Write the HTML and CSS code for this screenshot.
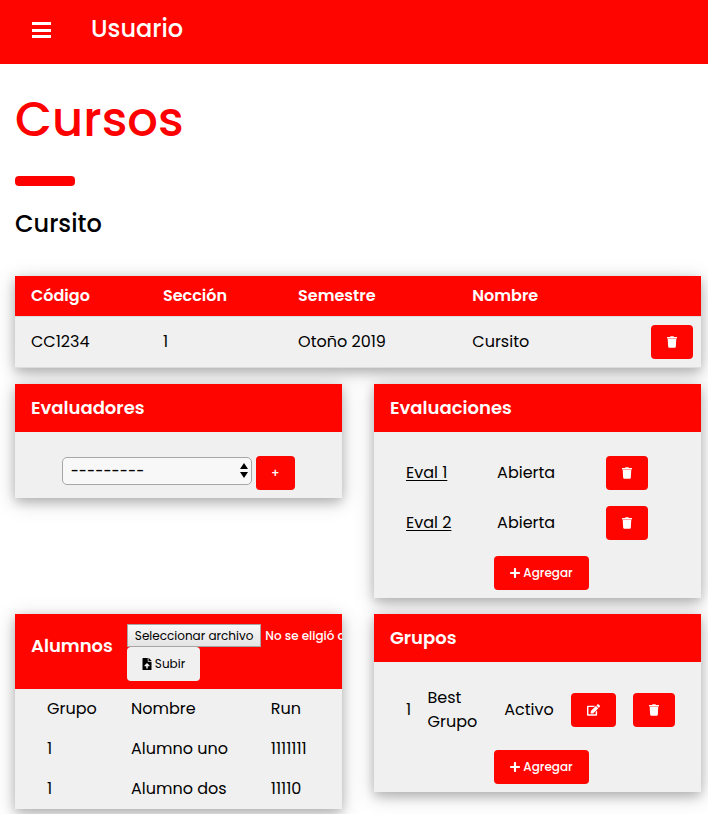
FILE: index.html
```html
<!DOCTYPE html>
<html lang="es">
<head>
<meta charset="utf-8">
<meta name="viewport" content="width=device-width, initial-scale=1">
<title>Cursos</title>
<link rel="stylesheet" href="styles.css">
</head>
<body>
<svg class="sprite" aria-hidden="true">
  <symbol id="trash" viewBox="0 0 448 512"><path d="M432 32H312l-9.400-18.700A24 24 0 0 0 281.100 0H166.800a23.720 23.720 0 0 0-21.400 13.300L136 32H16A16 16 0 0 0 0 48v32a16 16 0 0 0 16 16h416a16 16 0 0 0 16-16V48a16 16 0 0 0-16-16z" /><path d="M53.200 467a48 48 0 0 0 47.900 45h245.800a48 48 0 0 0 47.900-45L416 112H32z"/></symbol>
  <symbol id="plus" viewBox="0 0 448 512"><path d="M416 208H272V64c0-17.670-14.330-32-32-32h-32c-17.670 0-32 14.330-32 32v144H32c-17.670 0-32 14.330-32 32v32c0 17.670 14.330 32 32 32h144v144c0 17.670 14.330 32 32 32h32c17.670 0 32-14.330 32-32V304h144c17.670 0 32-14.330 32-32v-32c0-17.670-14.330-32-32-32z"/></symbol>
  <symbol id="edit" viewBox="0 0 576 512"><path d="M402.600 83.200l90.200 90.200c3.800 3.800 3.800 10 0 13.800L274.400 405.600l-92.800 10.300c-12.400 1.400-22.900-9.100-21.500-21.500l10.300-92.800L388.800 83.200c3.800-3.800 10-3.800 13.800 0zm162-22.900l-48.800-48.800c-15.200-15.200-39.900-15.200-55.200 0l-35.400 35.400c-3.800 3.800-3.800 10 0 13.800l90.200 90.200c3.800 3.800 10 3.800 13.800 0l35.400-35.400c15.200-15.300 15.200-40 0-55.200zM384 346.200V448H64V128h229.800c3.200 0 6.200-1.300 8.500-3.500l40-40c7.600-7.600 2.200-20.500-8.500-20.500H48C21.500 64 0 85.500 0 112v352c0 26.500 21.500 48 48 48h352c26.500 0 48-21.500 48-48V306.200c0-10.700-12.900-16-20.500-8.500l-40 40c-2.200 2.300-3.500 5.300-3.500 8.500z"/></symbol>
  <symbol id="upload" viewBox="0 0 384 512"><path d="M224 136V0H24C10.700 0 0 10.700 0 24v464c0 13.300 10.700 24 24 24h336c13.300 0 24-10.700 24-24V160H248c-13.200 0-24-10.800-24-24zm65.200 216H224v80c0 8.800-7.200 16-16 16h-32c-8.800 0-16-7.200-16-16v-80H94.800c-14.300 0-21.400-17.300-11.300-27.400l96.400-95.700c6.700-6.600 17.400-6.600 24 0l96.400 95.700c10.200 10.100 3.100 27.400-11.100 27.400zM377 105L279.100 7c-4.500-4.500-10.600-7-17-7H256v128h128v-6.100c0-6.300-2.500-12.400-7-16.900z"/></symbol>
</svg>
<header class="topbar">
  <button class="menu" type="button" aria-label="Menú">
    <svg width="19" height="16" viewBox="0 0 19 16" aria-hidden="true"><path d="M0 0h19v3H0zM0 7h19v3H0zM0 13h19v3H0z"/></svg>
  </button>
  <span class="user">Usuario</span>
</header>
<main class="page">
  <h1 class="title">Cursos</h1>
  <hr class="rule">
  <h2 class="subtitle">Cursito</h2>

  <table class="card course">
    <thead>
      <tr><th class="c-code">Código</th><th class="c-section">Sección</th><th class="c-term">Semestre</th><th class="c-name">Nombre</th><th></th></tr>
    </thead>
    <tbody>
      <tr><td>CC1234</td><td>1</td><td>Otoño 2019</td><td>Cursito</td><td><button class="btn" type="button" aria-label="Eliminar"><svg class="icon"><use href="#trash"/></svg></button></td></tr>
    </tbody>
  </table>

  <div class="cards">
    <section class="card">
      <header class="card-head"><h3>Evaluadores</h3></header>
      <form class="picker">
        <span class="select-box">
          <select class="select" aria-label="Evaluador"><option>---------</option></select>
          <svg class="arrows" viewBox="0 0 8 15" aria-hidden="true"><path d="M4 0l4 6H0zM4 15l4-6H0z"/></svg>
        </span>
        <button class="btn" type="button">+</button>
      </form>
    </section>

    <section class="card">
      <header class="card-head"><h3>Evaluaciones</h3></header>
      <div class="card-body">
        <table class="list">
          <tr><td class="e-name"><a href="#eval1">Eval 1</a></td><td class="e-state">Abierta</td><td><button class="btn" type="button" aria-label="Eliminar"><svg class="icon"><use href="#trash"/></svg></button></td></tr>
          <tr><td><a href="#eval2">Eval 2</a></td><td>Abierta</td><td><button class="btn" type="button" aria-label="Eliminar"><svg class="icon"><use href="#trash"/></svg></button></td></tr>
        </table>
        <div class="add"><button class="btn" type="button"><svg class="icon"><use href="#plus"/></svg>Agregar</button></div>
      </div>
    </section>

    <section class="card">
      <header class="card-head with-form">
        <h3>Alumnos</h3>
        <form class="upload">
          <div class="file">
            <input class="file-input" type="file" id="archivo">
            <label class="file-btn" for="archivo">Seleccionar archivo</label>
            <span class="file-name">No se eligió archivo</span>
          </div>
          <button class="btn light" type="button"><svg class="icon"><use href="#upload"/></svg>Subir</button>
        </form>
      </header>
      <table class="list">
        <tr><td class="a-group">Grupo</td><td class="a-name">Nombre</td><td>Run</td></tr>
        <tr><td>1</td><td>Alumno uno</td><td>1111111</td></tr>
        <tr><td>1</td><td>Alumno dos</td><td>11110</td></tr>
      </table>
    </section>

    <section class="card">
      <header class="card-head"><h3>Grupos</h3></header>
      <div class="card-body">
        <table class="list">
          <tr><td class="g-num">1</td><td class="g-name">Best Grupo</td><td class="g-state">Activo</td><td class="g-edit"><button class="btn" type="button" aria-label="Editar"><svg class="icon wide"><use href="#edit"/></svg></button></td><td><button class="btn" type="button" aria-label="Eliminar"><svg class="icon"><use href="#trash"/></svg></button></td></tr>
        </table>
        <div class="add"><button class="btn" type="button"><svg class="icon"><use href="#plus"/></svg>Agregar</button></div>
      </div>
    </section>
  </div>
</main>
</body>
</html>
```
FILE: styles.css
```css
:root {
  --red: #ff0500;
  --gray: #f0f0f0;
}

* {
  box-sizing: border-box;
}

body {
  margin: 0;
  background: #fff;
  color: #000;
  font: 16px/24px Poppins, Inter, sans-serif;
}

.sprite {
  display: none;
}

h1,
h2,
h3 {
  margin: 0;
}

.topbar {
  display: flex;
  align-items: center;
  gap: 24px;
  height: 64px;
  padding: 0 16px 4px;
  background: var(--red);
  color: #fff;
}

.menu {
  display: flex;
  padding: 16px;
  border: 0;
  background: none;
  fill: #fff;
}

.user {
  padding-bottom: 2px;
  font-size: 24px;
  font-weight: 500;
  line-height: 36px;
}

.page {
  padding: 16px 7px 5px 15px;
}

.title {
  color: red;
  font-size: 48px;
  font-weight: 500;
  line-height: 80px;
}

.rule {
  width: 60px;
  height: 10px;
  margin: 16px 0;
  border: 0;
  border-radius: 4px;
  background: red;
}

.subtitle {
  margin-bottom: 30px;
  font-size: 24px;
  font-weight: 500;
  line-height: 44px;
}

.card {
  background: var(--gray);
  box-shadow: 0 4px 10px rgba(0, 0, 0, 0.2), 0 4px 20px rgba(0, 0, 0, 0.19);
}

table {
  width: 100%;
  border-spacing: 0;
  border-collapse: collapse;
  table-layout: fixed;
}

th,
td {
  padding: 8px;
  text-align: left;
  vertical-align: middle;
}

th:first-child,
td:first-child {
  padding-left: 16px;
}

.course tr {
  border-bottom: 1px solid #ddd;
}

.course th {
  background: var(--red);
  color: #fff;
  font-weight: 600;
}

.c-code { width: 20.4%; }
.c-section { width: 19.7%; }
.c-term { width: 25.4%; }
.c-name { width: 26%; }

.course td:last-child {
  text-align: right;
}

.cards {
  display: grid;
  grid-template-columns: repeat(2, minmax(0, 1fr));
  align-items: start;
  gap: 16px 32px;
  margin-top: 16px;
}

.card-head {
  padding: 10px 16px;
  overflow: hidden;
  background: var(--red);
  color: #fff;
}

.card-head h3 {
  font-size: 18px;
  font-weight: 600;
  line-height: 28px;
}

.card-body {
  padding-top: 16px;
}

.list {
  width: calc(100% - 32px);
  margin: 0 16px;
}

.list a {
  color: inherit;
  text-underline-offset: 2px;
}

.e-name { width: 33.6%; }
.e-state { width: 36.9%; }
.a-group { width: 31.2%; }
.a-name { width: 47.4%; }
.g-num { width: 10%; }
.g-name { width: 26%; }
.g-state { width: 22.6%; }
.g-edit { width: 21%; }

.btn {
  display: inline-flex;
  align-items: center;
  justify-content: center;
  gap: 3px;
  min-height: 34px;
  padding: 8px 16px;
  border: 0;
  border-radius: 4px;
  background: var(--red);
  color: #fff;
  fill: currentColor;
  font: 12px/18px Poppins, Inter, sans-serif;
  vertical-align: middle;
}

.btn.light {
  padding: 8px 15px;
  background: var(--gray);
  color: #000;
}

.add .btn {
  font-weight: 500;
}

.picker .btn {
  padding: 8px 15px;
  font-weight: 500;
}

.icon {
  width: 10px;
  height: 12px;
}

.icon.wide {
  width: 13px;
}

.add {
  display: flex;
  justify-content: center;
  padding: 8px 0 8px 8px;
}

.picker {
  display: flex;
  align-items: flex-start;
  justify-content: center;
  gap: 4px;
  padding: 24px 0 8px;
}

.select-box {
  position: relative;
  display: flex;
  width: 58%;
  padding-top: 1px;
}

.select {
  width: 100%;
  height: 28px;
  padding: 0 7px;
  appearance: none;
  border: 1px solid #a6a6a6;
  border-radius: 5px;
  background: #f8f8f8;
  color: #000;
  font: 500 14px/24px Poppins, Inter, sans-serif;
}

.arrows {
  position: absolute;
  top: 7px;
  right: 4px;
  width: 8px;
  height: 15px;
  pointer-events: none;
}

.with-form {
  display: flex;
  gap: 14px;
  padding: 10px 0 8px 16px;
}

.with-form h3 {
  padding-top: 8px;
}

.upload {
  flex: 1;
  min-width: 0;
}

.file {
  position: relative;
  display: flex;
  align-items: center;
  gap: 4px;
  font-size: 12px;
  line-height: 21px;
  white-space: nowrap;
}

.file-input {
  position: absolute;
  width: 100%;
  opacity: 0;
}

.file-btn {
  padding: 0 7px;
  border: 1px solid #a6a6a6;
  background: linear-gradient(#f8f8f8, #e4e4e4);
  color: #000;
}

.file-name {
  font-weight: 500;
}
```
